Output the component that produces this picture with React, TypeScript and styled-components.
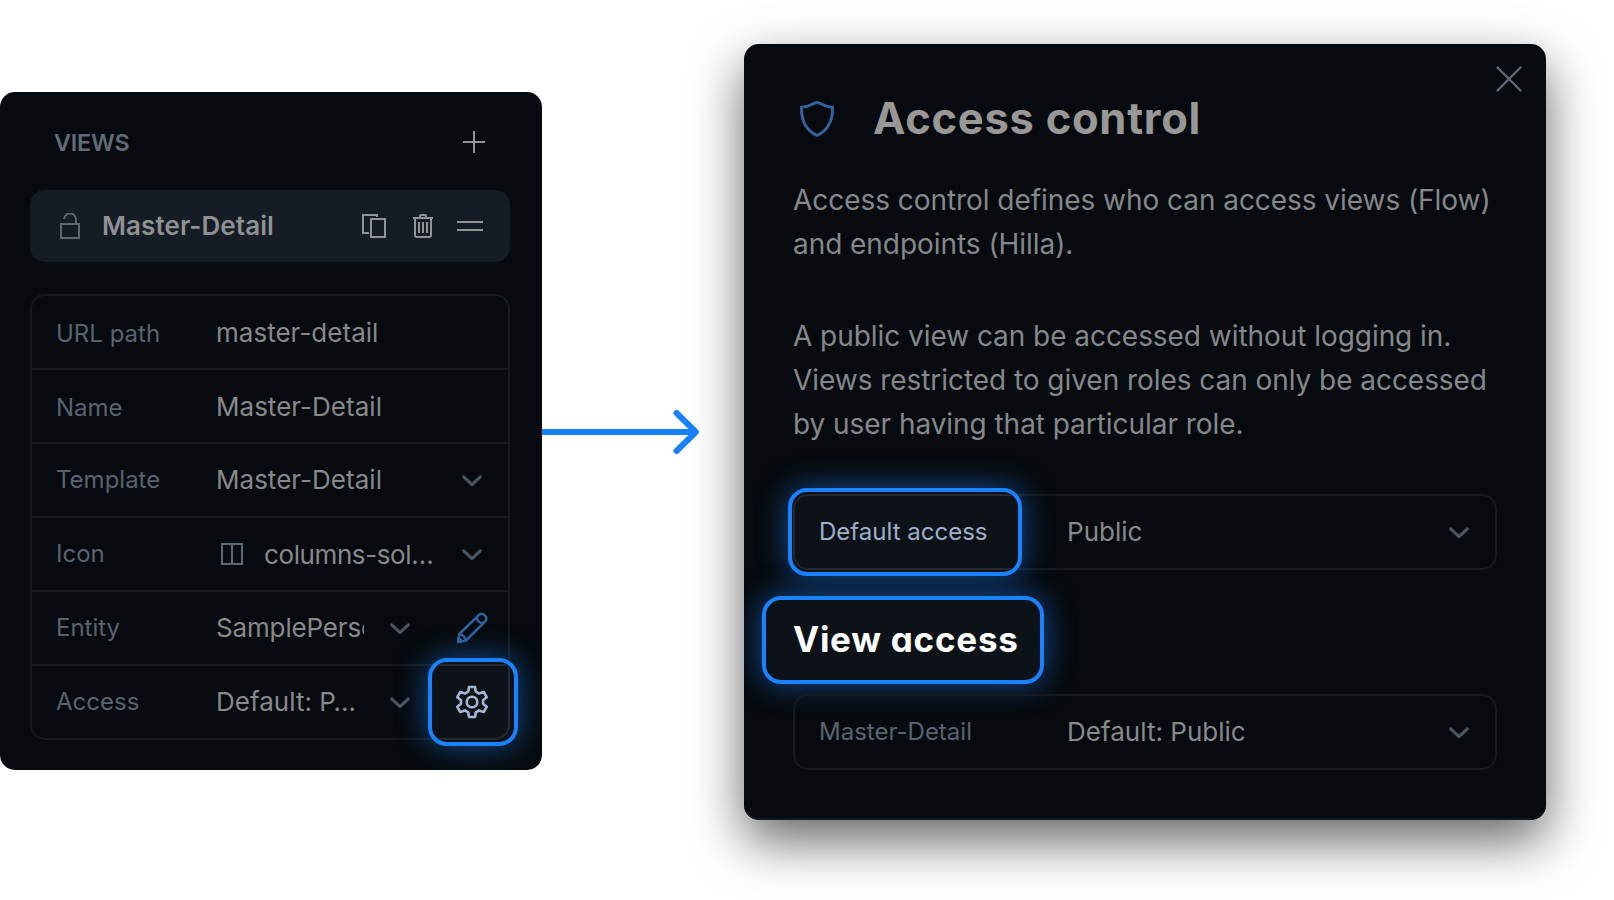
import React from "react";
import styled, { createGlobalStyle } from "styled-components";

const color = {
  panel: "#070b0f",
  line: "#171b1f",
  lit: "#0d1219",
  litLine: "#24282f",
  accent: "#1a81ff",
  label: "#59636f",
  value: "#87898b",
  strong: "#8f9193",
};

const GlobalStyle = createGlobalStyle`
  body { margin: 0; background: #fff; overflow: hidden; }
  * { box-sizing: border-box; }
  svg { display: block; flex: none; }
`;

const Page = styled.main`
  display: flex;
  align-items: flex-start;
  width: 1614px;
  height: 900px;
  overflow: hidden;
  font-family: Inter, "Liberation Sans", sans-serif;
`;

const ViewsPanel = styled.section`
  width: 542px;
  height: 678px;
  margin-top: 92px;
  padding: 0 32px 0 30px;
  overflow: hidden;
  border-radius: 15px;
  background: ${color.panel};
`;

const PanelHeader = styled.header`
  display: flex;
  align-items: center;
  justify-content: space-between;
  height: 98px;
  padding: 2px 25px 0 24px;
`;

const PanelTitle = styled.h2`
  margin: 0;
  font-size: 23.3px;
  font-weight: 600;
  letter-spacing: -0.2px;
  color: #616a77;
`;

const SelectedView = styled.div`
  display: flex;
  align-items: center;
  height: 72px;
  padding: 0 26px 0 29px;
  border-radius: 15px;
  background: #151c23;
`;

const SelectedName = styled.span`
  flex: 1;
  margin-left: 21px;
  padding-bottom: 2px;
  font-size: 26px;
  font-weight: 600;
  letter-spacing: 0.08px;
  color: ${color.strong};
`;

const ViewActions = styled.div`
  display: grid;
  grid-template-columns: 24px 24px 26px;
  align-items: center;
  column-gap: 24px;

  & > :last-child {
    margin-left: -1px;
  }
`;

const Properties = styled.div`
  margin-top: 32px;
  border: 2px solid ${color.line};
  border-radius: 15px;
`;

const Property = styled.div`
  position: relative;
  display: flex;
  align-items: center;
  height: 72px;
  padding: 0 26px 0 24px;

  & + & {
    height: 74px;
    border-top: 2px solid ${color.line};
  }
`;

const Label = styled.span<{ $width: number; $lit?: boolean; $low?: boolean }>`
  position: relative;
  z-index: 1;
  flex: none;
  width: ${(p) => p.$width}px;
  padding: ${(p) => (p.$low ? "3px 0 0" : "0 0 2px")};
  font-size: 24px;
  white-space: nowrap;
  color: ${(p) => (p.$lit ? "#9fb0cb" : color.label)};
`;

const Value = styled.span<{ $low?: boolean; $tight?: boolean }>`
  flex: 1;
  min-width: 0;
  overflow: hidden;
  padding: ${(p) => (p.$low ? "1px 0 0" : "0 0 1px")};
  font-size: 26px;
  letter-spacing: ${(p) => (p.$tight ? "-0.4px" : "0.02px")};
  white-space: nowrap;
  color: ${color.value};
`;

const IconSlot = styled.span`
  margin: 0 21px 0 5px;
`;

const ChevronSlot = styled.span`
  margin-left: 26px;
`;

const EntityValue = styled(Value)`
  letter-spacing: -0.15px;
`;

const RowAction = styled.span`
  position: relative;
  z-index: 1;
  width: 32px;
  margin: 0 -6px 0 46px;
`;

const Highlight = styled.span<{ $x: number; $y: number; $w: number }>`
  position: absolute;
  left: ${(p) => p.$x}px;
  top: ${(p) => p.$y}px;
  width: ${(p) => p.$w}px;
  height: 88px;
  overflow: hidden;
  border: 4px solid ${color.accent};
  border-radius: 19px;
  background: ${color.lit};
  box-shadow: 0 0 29px rgba(26, 129, 255, 0.55);
`;

const LitEdge = styled.span<{ $side: "left" | "right" }>`
  position: absolute;
  top: 2px;
  ${(p) => p.$side}: ${(p) => (p.$side === "left" ? 1 : 4)}px;
  width: 300px;
  height: 76px;
  border: 2px solid ${color.litLine};
  border-radius: ${(p) => (p.$side === "left" ? "15px" : "0 0 15px 0")};
`;

const Connector = styled.svg`
  width: 202px;
  height: 60px;
  margin-top: 402px;
`;

const Dialog = styled.section`
  position: relative;
  width: 802px;
  height: 776px;
  margin-top: 44px;
  padding: 0 49px;
  overflow: hidden;
  border-radius: 15px;
  background: ${color.panel};
  box-shadow: 0 21px 52px rgba(0, 0, 0, 0.6), inset 0 -2px 0 #14181b;
`;

const CloseButton = styled.span`
  position: absolute;
  top: 22px;
  right: 24px;
`;

const DialogHeader = styled.header`
  display: flex;
  align-items: center;
  height: 136px;
  padding: 14px 0 0 7px;
`;

const DialogTitle = styled.h1`
  margin: 0 0 0 39px;
  padding-bottom: 2px;
  font-size: 43.5px;
  font-weight: 700;
  line-height: 60px;
  letter-spacing: 0.72px;
  color: #999897;
`;

const CopyBlock = styled.div`
  height: 314px;
`;

const Copy = styled.p`
  position: relative;
  top: -2px;
  margin: 0 0 48px;
  font-size: 28px;
  line-height: 44px;
  letter-spacing: -0.05px;
  white-space: nowrap;
  color: #85888b;
`;

const AccessRow = styled.div`
  position: relative;
  display: flex;
  align-items: center;
  width: 704px;
  height: 76px;
  padding: 0 26px 0 24px;
  border: 2px solid ${color.line};
  border-radius: 15px;
`;

const ViewAccess = styled.div`
  position: relative;
  display: flex;
  align-items: center;
  height: 124px;
`;

const SectionTitle = styled.h2`
  position: relative;
  z-index: 1;
  margin: 0;
  padding-top: 13px;
  font-size: 35px;
  font-weight: 700;
  letter-spacing: 0.75px;
  font-feature-settings: "cv11";
  color: #fff;
`;

const ChevronMark = styled.svg`
  margin-top: 2px;
`;

const Chevron = () => (
  <ChevronMark width="20" height="12" viewBox="0 0 20 12" fill="none" stroke="#4c5661" strokeWidth="3" strokeLinecap="round" strokeLinejoin="round">
    <path d="M1.7 1.8 10 9.700l8.300-7.900" />
  </ChevronMark>
);

const PlusIcon = () => (
  <svg width="22" height="22" viewBox="0 0 22 22" stroke="#929395" strokeWidth="2">
    <path d="M11 0v22M0 11h22" />
  </svg>
);

const LockIcon = () => (
  <svg width="22" height="26" viewBox="0 0 22 26" fill="none" stroke="#5e6875" strokeWidth="2">
    <path d="M2 11h18v14H2zM5 6a6 6 0 0 1 12 1v4" />
  </svg>
);

const DuplicateIcon = () => (
  <svg width="24" height="24" viewBox="0 0 24 24" fill="none" stroke="#929395" strokeWidth="2">
    <path d="M9 5h14v18H9zM7 19H1V1h14v2" />
  </svg>
);

const TrashIcon = () => (
  <svg width="24" height="24" viewBox="-3 0 24 24" fill="none" stroke="#929395" strokeWidth="2">
    <path d="M0 4h20M2 4v17a2 2 0 0 0 2 2h12a2 2 0 0 0 2-2V4M7 4V2q0-1 1-1h4q1 0 1 1v2M6 8v11M10 8v11M14 8v11" />
  </svg>
);

const DragIcon = () => (
  <svg width="26" height="10" viewBox="0 0 26 10" stroke="#929395" strokeWidth="2">
    <path d="M0 1h26M0 9h26" />
  </svg>
);

const ColumnsIcon = () => (
  <svg width="22" height="22" viewBox="0 0 22 22" fill="none" stroke="#5e6875" strokeWidth="2">
    <path d="M1 1h20v20H1zM11 1v20" />
  </svg>
);

const PencilIcon = () => (
  <svg width="32" height="32" viewBox="0 0 32 32" fill="none" stroke="#2f619f" strokeWidth="2.5" strokeLinejoin="round">
    <path d="m2 30 1.300-8L23 2.800a4.600 4.600 0 0 1 6.400 6.400L10 28.500ZM20.600 5.200c.5 3.300 2.800 5.600 6.200 6.200M3.300 22c3 .6 5.700 3 6.700 6.500" />
    <path d="m2.200 30 .6-3.800 3.200 3Z" fill="#2f619f" />
  </svg>
);

const GearIcon = () => (
  <svg width="32" height="34" viewBox="0 0 32 34" fill="none" stroke="#a4b5d0" strokeWidth="2.6" strokeLinejoin="round">
    <path d="M13 2h6l.8 4.700 3.300 1.900L27.700 7l3 5.200-3.700 3v3.600l3.700 3-3 5.200-4.600-1.600-3.300 1.900L19 32h-6l-.8-4.700-3.300-1.900L4.300 27l-3-5.200 3.700-3v-3.600l-3.700-3L4.300 7l4.600 1.600 3.300-1.900Z" />
    <circle cx="16" cy="17" r="5.300" />
  </svg>
);

const ShieldIcon = () => (
  <svg width="34" height="36" viewBox="0 0 34 36" fill="none" stroke="#33629d" strokeWidth="2.9">
    <path d="M17 1.500c-4.500 0-6.500 4.700-15.500 4.700C1.200 19 5 29 17 34.400 29 29 32.800 19 32.500 6.200 23.500 6.200 21.500 1.500 17 1.500Z" />
  </svg>
);

const CloseIcon = () => (
  <svg width="26" height="26" viewBox="0 0 26 26" stroke="#5f6978" strokeWidth="2.300" strokeLinecap="round">
    <path d="m1.500 1.500 23 23M24.500 1.500l-23 23" />
  </svg>
);

export default function App() {
  return (
    <Page>
      <GlobalStyle />
      <ViewsPanel>
        <PanelHeader>
          <PanelTitle>VIEWS</PanelTitle>
          <PlusIcon />
        </PanelHeader>
        <SelectedView>
          <LockIcon />
          <SelectedName>Master-Detail</SelectedName>
          <ViewActions>
            <DuplicateIcon />
            <TrashIcon />
            <DragIcon />
          </ViewActions>
        </SelectedView>
        <Properties>
          <Property>
            <Label $width={160} $low>URL path</Label>
            <Value $low>master-detail</Value>
          </Property>
          <Property>
            <Label $width={160} $low>Name</Label>
            <Value $low>Master-Detail</Value>
          </Property>
          <Property>
            <Label $width={160}>Template</Label>
            <Value>Master-Detail</Value>
            <Chevron />
          </Property>
          <Property>
            <Label $width={160}>Icon</Label>
            <IconSlot><ColumnsIcon /></IconSlot>
            <Value $low $tight>columns-sol…</Value>
            <Chevron />
          </Property>
          <Property>
            <Label $width={160}>Entity</Label>
            <EntityValue>SamplePerson</EntityValue>
            <ChevronSlot><Chevron /></ChevronSlot>
            <RowAction><PencilIcon /></RowAction>
          </Property>
          <Property>
            <Label $width={160}>Access</Label>
            <Value>Default: P…</Value>
            <ChevronSlot><Chevron /></ChevronSlot>
            <Highlight $x={396} $y={-8} $w={90}>
              <LitEdge $side="right" />
            </Highlight>
            <RowAction><GearIcon /></RowAction>
          </Property>
        </Properties>
      </ViewsPanel>

      <Connector viewBox="0 0 202 60" fill="none" stroke={color.accent} strokeWidth="6" strokeLinecap="round" strokeLinejoin="round">
        <path d="M0 30h152M134.500 11l19.300 19-19.300 19" />
      </Connector>

      <Dialog>
        <CloseButton><CloseIcon /></CloseButton>
        <DialogHeader>
          <ShieldIcon />
          <DialogTitle>Access control</DialogTitle>
        </DialogHeader>
        <CopyBlock>
          <Copy>
            Access control defines who can access views (Flow)
            <br />
            and endpoints (Hilla).
          </Copy>
          <Copy>
            A public view can be accessed without logging in.
            <br />
            Views restricted to given roles can only be accessed
            <br />
            by user having that particular role.
          </Copy>
        </CopyBlock>
        <AccessRow>
          <Highlight $x={-7} $y={-8} $w={234}>
            <LitEdge $side="left" />
          </Highlight>
          <Label $width={248} $lit>Default access</Label>
          <Value>Public</Value>
          <Chevron />
        </AccessRow>
        <ViewAccess>
          <Highlight $x={-31} $y={26} $w={282} />
          <SectionTitle>View access</SectionTitle>
        </ViewAccess>
        <AccessRow>
          <Label $width={248}>Master-Detail</Label>
          <Value>Default: Public</Value>
          <Chevron />
        </AccessRow>
      </Dialog>
    </Page>
  );
}
